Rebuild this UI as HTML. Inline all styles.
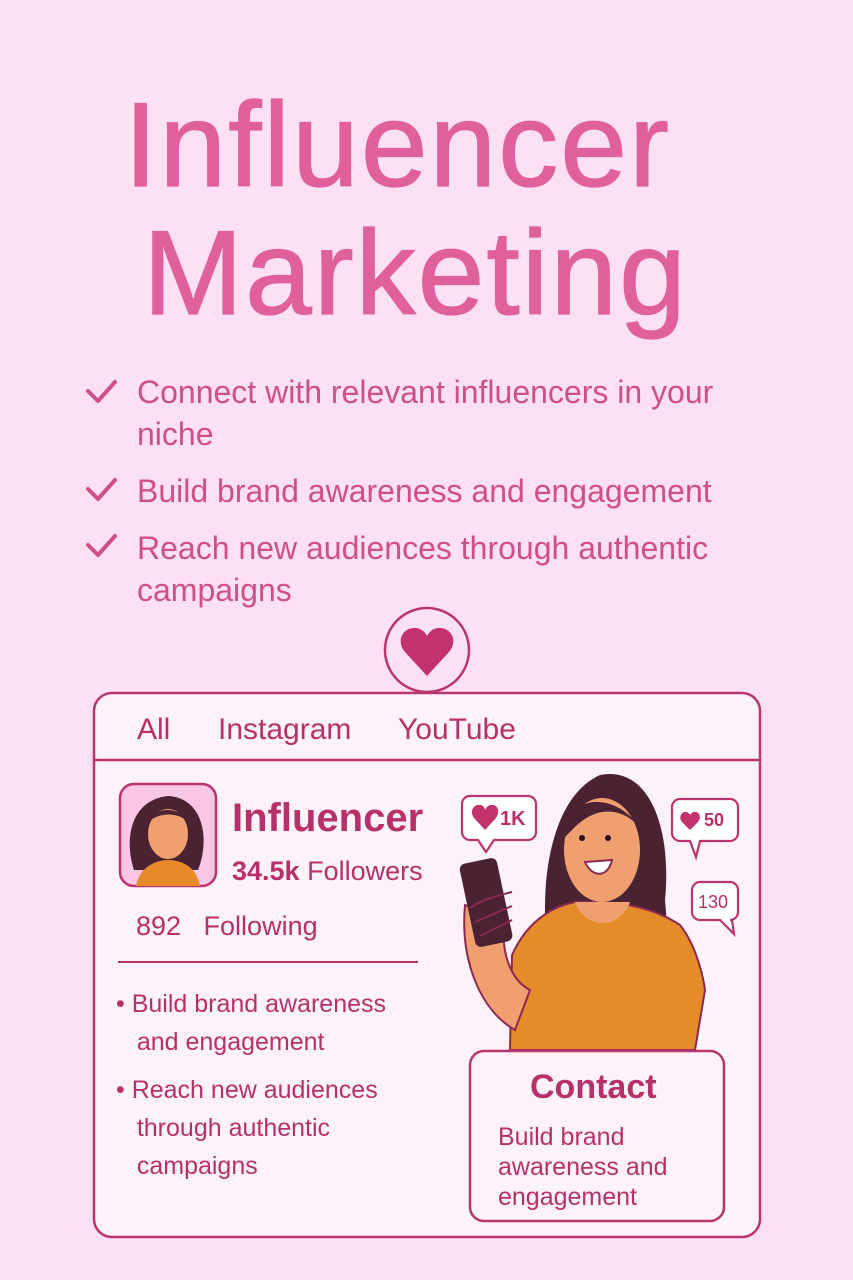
<!DOCTYPE html>
<html><head><meta charset="utf-8"><style>
body{margin:0;width:853px;height:1280px;background:#fde0f3;font-family:"Liberation Sans",sans-serif;position:relative;overflow:hidden}
.a{position:absolute;white-space:nowrap}
.t{color:#e0609c;font-size:120px;letter-spacing:2px;-webkit-text-stroke:1.2px #e0609c}
.li{color:#cf4f88;font-size:32px}
.d{color:#b8306a}
</style></head><body>
<div class="a t" style="left:124px;top:76px">Influencer</div>
<div class="a t" style="left:143px;top:204px">Marketing</div>
<svg class="a" style="left:0;top:0" width="853" height="1280">
<g fill="none" stroke="#cf4f88" stroke-width="4" stroke-linecap="round" stroke-linejoin="round">
<path d="M88 391 L98 401 L115 382"/><path d="M88 489 L98 499 L115 480"/><path d="M88 545 L98 555 L115 536"/></g>
<rect x="94" y="693" width="666" height="544" rx="18" fill="#fdf2fa" stroke="#b8356e" stroke-width="2.5"/>
<line x1="94" y1="760" x2="760" y2="760" stroke="#b8356e" stroke-width="2.5"/>
<circle cx="427" cy="650" r="42" fill="#fde0f3" stroke="#b8356e" stroke-width="2.5"/>
<path d="M427 676 L405 652 C395 640 404 627 415 628 C421 628 425 632 427 636 C429 632 433 628 439 628 C450 627 459 640 449 652 Z" fill="#c2336c"/>
<rect x="120" y="784" width="96" height="102" rx="14" fill="#f9c6e6" stroke="#b8356e" stroke-width="2.5"/>
<path d="M134 870 C124 840 130 800 168 796 C204 798 210 840 198 870 Z" fill="#4a2232"/>
<path d="M136 886 C140 864 160 860 168 860 C178 860 196 864 200 886 Z" fill="#e78a2a"/>
<ellipse cx="168" cy="834" rx="20" ry="25" fill="#f0a070"/>
<path d="M148 822 C155 806 180 806 188 822 C178 812 160 812 148 822 Z" fill="#4a2232"/>
<line x1="118" y1="962" x2="418" y2="962" stroke="#b8356e" stroke-width="2"/>
<path d="M548 950 C540 900 545 800 600 775 C650 765 672 830 665 900 L670 960 Z" fill="#4a2232"/>
<path d="M510 1050 L512 955 C530 915 560 905 575 902 C610 900 650 905 680 925 C700 950 705 990 705 990 L695 1050 Z" fill="#e68b2a" stroke="#8a2a50" stroke-width="2"/>
<path d="M575 902 C585 930 620 930 630 902 Z" fill="#f0a070"/>
<ellipse cx="602" cy="850" rx="38" ry="52" fill="#f0a070"/>
<path d="M562 840 C565 790 620 790 645 835 C630 810 600 800 572 830 Z" fill="#4a2232"/>
<circle cx="582" cy="838" r="3" fill="#2a1020"/><circle cx="608" cy="838" r="3" fill="#2a1020"/>
<path d="M585 862 C592 878 608 878 612 860 Z" fill="#fff" stroke="#8a2a50" stroke-width="2"/>
<path d="M465 905 C460 960 480 1010 515 1030 L530 990 C510 980 500 950 505 920 Z" fill="#f0a070" stroke="#8a2a50" stroke-width="2"/>
<rect x="467" y="860" width="38" height="85" rx="6" fill="#4a2232" transform="rotate(-12 486 902)"/>
<path d="M470 908 C480 900 500 895 512 892 M475 922 L512 906 M480 936 L512 920" stroke="#8a2a50" stroke-width="2" fill="none"/>
<rect x="470" y="1051" width="254" height="170" rx="14" fill="#fdf2fa" stroke="#b8356e" stroke-width="2.5"/>
<g fill="#fff" stroke="#b8356e" stroke-width="2.2">
<path d="M470 796 H528 a8 8 0 0 1 8 8 V832 a8 8 0 0 1 -8 8 H494 L486 852 L478 840 H470 a8 8 0 0 1 -8 -8 V804 a8 8 0 0 1 8 -8Z"/>
<path d="M680 799 H730 a8 8 0 0 1 8 8 V833 a8 8 0 0 1 -8 8 H700 L696 857 L690 841 H680 a8 8 0 0 1 -8 -8 V807 a8 8 0 0 1 8 -8Z"/>
<path d="M700 882 H730 a8 8 0 0 1 8 8 V912 a8 8 0 0 1 -8 8 H732 L734 934 L720 920 H700 a8 8 0 0 1 -8 -8 V890 a8 8 0 0 1 8 -8Z"/>
</g>
<path d="M485 830 L474 818 C469 811 474 804 480 805 C483 805 485 808 485 810 C486 808 488 805 491 805 C497 804 501 811 496 818Z" fill="#c2336c"/>
<path d="M690 830 L682 822 C678 817 682 811 686 812 C688 812 690 814 690 815 C691 814 692 812 694 812 C699 811 702 817 698 822Z" fill="#c2336c"/>
</svg>
<div class="a li" style="left:137px;top:371px;line-height:42px">Connect with relevant influencers in your<br>niche</div>
<div class="a li" style="left:137px;top:473px">Build brand awareness and engagement</div>
<div class="a li" style="left:137px;top:527px;line-height:42px">Reach new audiences through authentic<br>campaigns</div>
<div class="a d" style="left:137px;top:713px;font-size:30px">All</div>
<div class="a d" style="left:218px;top:713px;font-size:30px">Instagram</div>
<div class="a d" style="left:398px;top:713px;font-size:30px">YouTube</div>
<div class="a d" style="left:232px;top:796px;font-size:40px;font-weight:bold">Influencer</div>
<div class="a d" style="left:232px;top:856px;font-size:27px"><b>34.5k</b> Followers</div>
<div class="a d" style="left:136px;top:911px;font-size:27px">892&nbsp;&nbsp;&nbsp;Following</div>
<div class="a d" style="left:116px;top:985px;font-size:25px;line-height:38px">•&nbsp;Build brand awareness<br>&nbsp;&nbsp;&nbsp;and engagement</div>
<div class="a d" style="left:116px;top:1071px;font-size:25px;line-height:38px">•&nbsp;Reach new audiences<br>&nbsp;&nbsp;&nbsp;through authentic<br>&nbsp;&nbsp;&nbsp;campaigns</div>
<div class="a d" style="left:500px;top:808px;font-size:20px;font-weight:bold">1K</div>
<div class="a d" style="left:704px;top:810px;font-size:18px;font-weight:bold">50</div>
<div class="a d" style="left:698px;top:892px;font-size:18px">130</div>
<div class="a d" style="left:530px;top:1068px;font-size:34px;font-weight:bold">Contact</div>
<div class="a d" style="left:498px;top:1122px;font-size:25px;line-height:30px">Build brand<br>awareness and<br>engagement</div>
</body></html>
